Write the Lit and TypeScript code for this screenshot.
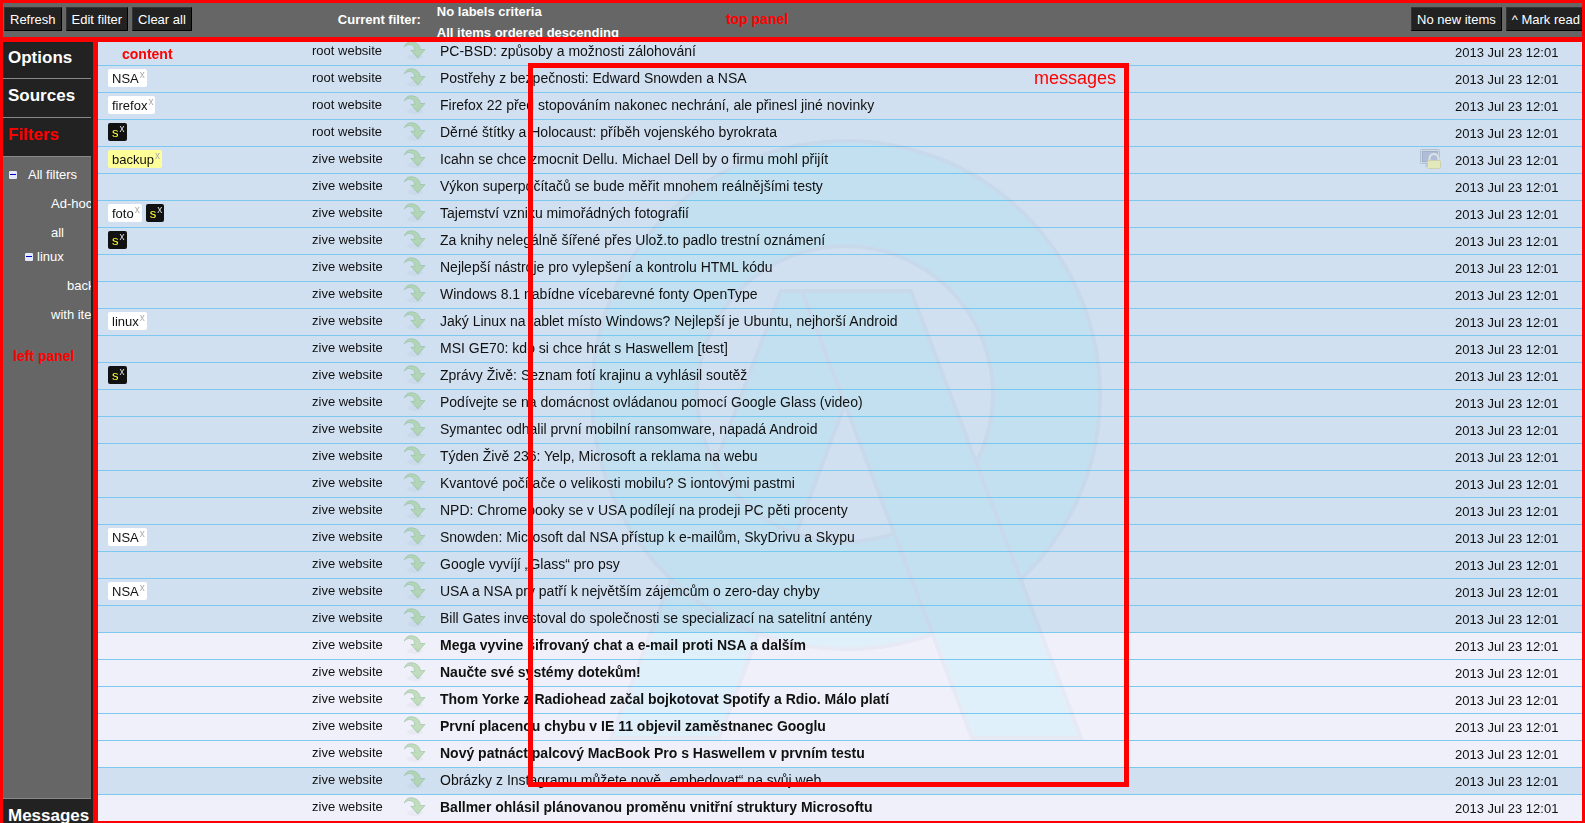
import { LitElement, html, css, nothing } from "lit";
import { customElement, property } from "lit/decorators.js";
import { classMap } from "lit/directives/class-map.js";

interface Message {
  labels?: string[];
  source: string;
  title: string;
  unread?: boolean;
  secure?: boolean;
}

const ROOT = "root website";
const ZIVE = "zive website";
const DATE = "2013 Jul 23 12:01";

const MESSAGES: Message[] = [
  { source: ROOT, title: "PC-BSD: způsoby a možnosti zálohování" },
  { source: ROOT, title: "Postřehy z bezpečnosti: Edward Snowden a NSA", labels: ["NSA"] },
  { source: ROOT, title: "Firefox 22 před stopováním nakonec nechrání, ale přinesl jiné novinky", labels: ["firefox"] },
  { source: ROOT, title: "Děrné štítky a Holocaust: příběh vojenského byrokrata", labels: ["s"] },
  { source: ZIVE, title: "Icahn se chce zmocnit Dellu. Michael Dell by o firmu mohl přijít", labels: ["backup"], secure: true },
  { source: ZIVE, title: "Výkon superpočítačů se bude měřit mnohem reálnějšími testy" },
  { source: ZIVE, title: "Tajemství vzniku mimořádných fotografií", labels: ["foto", "s"] },
  { source: ZIVE, title: "Za knihy nelegálně šířené přes Ulož.to padlo trestní oznámení", labels: ["s"] },
  { source: ZIVE, title: "Nejlepší nástroje pro vylepšení a kontrolu HTML kódu" },
  { source: ZIVE, title: "Windows 8.1 nabídne vícebarevné fonty OpenType" },
  { source: ZIVE, title: "Jaký Linux na tablet místo Windows? Nejlepší je Ubuntu, nejhorší Android", labels: ["linux"] },
  { source: ZIVE, title: "MSI GE70: kdo si chce hrát s Haswellem [test]" },
  { source: ZIVE, title: "Zprávy Živě: Seznam fotí krajinu a vyhlásil soutěž", labels: ["s"] },
  { source: ZIVE, title: "Podívejte se na domácnost ovládanou pomocí Google Glass (video)" },
  { source: ZIVE, title: "Symantec odhalil první mobilní ransomware, napadá Android" },
  { source: ZIVE, title: "Týden Živě 236: Yelp, Microsoft a reklama na webu" },
  { source: ZIVE, title: "Kvantové počítače o velikosti mobilu? S iontovými pastmi" },
  { source: ZIVE, title: "NPD: Chromebooky se v USA podílejí na prodeji PC pěti procenty" },
  { source: ZIVE, title: "Snowden: Microsoft dal NSA přístup k e-mailům, SkyDrivu a Skypu", labels: ["NSA"] },
  { source: ZIVE, title: "Google vyvíjí „Glass“ pro psy" },
  { source: ZIVE, title: "USA a NSA prý patří k největším zájemcům o zero-day chyby", labels: ["NSA"] },
  { source: ZIVE, title: "Bill Gates investoval do společnosti se specializací na satelitní antény" },
  { source: ZIVE, title: "Mega vyvine šifrovaný chat a e-mail proti NSA a dalším", unread: true },
  { source: ZIVE, title: "Naučte své systémy dotekům!", unread: true },
  { source: ZIVE, title: "Thom Yorke z Radiohead začal bojkotovat Spotify a Rdio. Málo platí", unread: true },
  { source: ZIVE, title: "První placenou chybu v IE 11 objevil zaměstnanec Googlu", unread: true },
  { source: ZIVE, title: "Nový patnáctipalcový MacBook Pro s Haswellem v prvním testu", unread: true },
  { source: ZIVE, title: "Obrázky z Instagramu můžete nově „embedovat“ na svůj web" },
  { source: ZIVE, title: "Ballmer ohlásil plánovanou proměnu vnitřní struktury Microsoftu", unread: true },
];

const arrowIcon = html`<svg class="icon" width="24" height="20" viewBox="0 0 24 20" aria-hidden="true">
  <ellipse cx="12" cy="16" rx="8" ry="3" fill="#8a9aa8" opacity=".08"/>
  <path d="M1.300 6C2.500 2.300 5 .7 8 .7C13 .9 16.800 3.500 17.300 8.500H22L14.800 17L7.800 9.300H11.800C11.600 6 10.300 4.200 7.300 3.600C4.500 3.300 2.800 4.500 1.300 6Z"
    fill="#96cc84" fill-opacity=".52" stroke="#7fb08a" stroke-opacity=".42"/>
</svg>`;

const secureIcon = html`<svg class="icon" width="22" height="21" viewBox="0 0 22 21" aria-hidden="true">
  <rect x=".5" y=".5" width="19" height="14" rx="1" fill="#d0dae6" stroke="#b0c0cf"/>
  <rect x="2.500" y="2.500" width="15" height="10" fill="#b0bcd8" stroke="#a0b0ca"/>
  <path d="M6 15h4v3H5z" fill="#bccad6"/>
  <path d="M9.500 12V9.500a4.500 4.500 0 0 1 9 0V12" fill="none" stroke="#b4c2d0" stroke-width="3"/>
  <path d="M9.500 12V9.500a4.500 4.500 0 0 1 9 0V12" fill="none" stroke="#dbe3ea" stroke-width="2"/>
  <rect x="7.500" y="11.500" width="13" height="8" rx="1" fill="#e2e7bc" stroke="#cbd0ae"/>
</svg>`;

const watermark = html`<svg class="watermark" width="516" height="606" viewBox="588 137 516 606" aria-hidden="true">
  <g fill="#eeffff" stroke="#f6f8fa" stroke-width="4">
    <path d="M781 291H802L845 404L719 738H611Z"/>
    <path fill-rule="evenodd" d="M592 395a254 254 0 1 0 508 0a254 254 0 1 0 -508 0ZM697 394a148 148 0 1 1 296 0a148 148 0 1 1 -296 0Z"/>
    <path d="M802 291H911L1081 738H972Z"/>
  </g>
</svg>`;

@customElement("message-label")
export class MessageLabel extends LitElement {
  @property() name = "";

  static styles = css`
    :host { display: inline-flex; }
    .label {
      display: flex; height: 18px; box-sizing: border-box; padding: 0 2px 0 4px;
      border-radius: 2px; background: #fff; color: #111; line-height: 19px;
    }
    .remove {
      display: flex; justify-content: flex-end; width: 6px; height: 12px; padding: 0; border: 0;
      background: none; color: #aaa; font: 10px/12px "Liberation Sans", Arial, sans-serif;
    }
    .yellow { background: #ffff99; }
    .dark { background: #111; color: #ffff33; }
    .dark .remove { color: #ddd; }
  `;

  render() {
    const kind = { label: true, yellow: this.name === "backup", dark: this.name === "s" };
    return html`<span class=${classMap(kind)}>${this.name}<button class="remove" aria-label="Remove label">x</button></span>`;
  }
}

@customElement("app-root")
export class AppRoot extends LitElement {
  static styles = css`
    :host {
      display: grid; grid-template: 42px minmax(0, 1fr) / 93px minmax(0, 1fr);
      height: 100vh; overflow: hidden; position: relative; background: #666;
      font: 13px/16px "Liberation Sans", Arial, sans-serif; color: #fff;
    }
    .top {
      grid-column: 1 / 3; display: flex; align-items: flex-start; box-sizing: border-box;
      padding: 4px 0 0 1px; gap: 4px; border: solid red; border-width: 3px 3px 5px 3px;
      overflow: hidden; white-space: nowrap;
    }
    .btn {
      flex: none; height: 24px; box-sizing: border-box; padding: 2px 5px 0; background: #222; color: #fff;
      border: 1px solid; border-color: #333 #000 #000 #333;
      font: 13px/20px "Liberation Sans", Arial, sans-serif;
    }
    .current { margin: 5px 12px 0 142px; font-weight: bold; }
    .criteria { font-weight: bold; line-height: 21px; margin-top: -6px; }
    .note { color: red; font-weight: bold; font-size: 14px; }
    .top-note { margin: 4px 0 0 103px; }
    .spacer { flex: 1; }
    .actions { display: flex; gap: 4px; width: 171px; overflow: hidden; }
    .left {
      display: flex; flex-direction: column; border-left: 3px solid red; background: #222;
      overflow: hidden; white-space: nowrap; box-sizing: border-box; padding-right: 2px;
    }
    .section {
      flex: none; height: 39px; box-sizing: border-box; margin: 0; border: 0; padding: 0 0 5px 5px;
      border-bottom: 1px solid #888; background: #222; color: #fff; text-align: left;
      font: bold 17px/20px "Liberation Sans", Arial, sans-serif;
    }
    .section.active { color: red; }
    .section.first { height: 37px; }
    .section.last { height: 25px; border-top: 1px solid #888; border-bottom: 0; padding: 7px 0 0 5px; }
    .tree { flex: 1; background: #666; overflow: hidden; }
    .node { display: flex; align-items: center; height: 29px; color: #fff; text-decoration: none; }
    .node.all { padding: 3px 0 0 6px; gap: 11px; }
    .node.group { height: 19px; padding: 0 0 5px 22px; gap: 4px; }
    .node.child { padding-left: 48px; }
    .node.grand { padding-left: 64px; }
    .toggle {
      width: 8px; height: 8px; padding: 0; box-sizing: border-box; border: 0; border-radius: 1px;
      background: linear-gradient(#00c, #00c) center / 6px 1px no-repeat #e4e8f8;
    }
    .left-note { padding: 19px 0 0 10px; }
    .content {
      position: relative; box-sizing: border-box; border: solid red; border-width: 0 3px 2px 5px;
      overflow: hidden; color: #111; isolation: isolate;
    }
    .list { width: 100%; border-collapse: separate; border-spacing: 0; table-layout: fixed; margin-top: -3px; }
    .row { background: #d1e0f1; }
    .row.unread { background: #f0f0fa; }
    .cell {
      height: 27px; box-sizing: border-box; padding: 0 0 2px; border-bottom: 1px solid #7dc8ee;
      vertical-align: middle; white-space: nowrap; overflow: hidden;
    }
    .c-labels { width: 214px; padding-left: 10px; }
    .c-source { width: 91px; }
    .c-icon { width: 37px; }
    .c-secure { width: 35px; }
    .c-date { width: 127px; padding: 2px 0 0; }
    .labels { display: flex; gap: 4px; }
    .title { font-size: 14px; line-height: 18px; }
    .unread .title { font-weight: bold; }
    .icon { display: block; }
    .watermark { position: absolute; left: 490px; top: 95px; mix-blend-mode: multiply; pointer-events: none; }
    .content-note { position: absolute; left: 24px; top: 4px; }
    .frame {
      position: absolute; left: 430px; top: 21px; width: 601px; height: 724px; box-sizing: border-box;
      border: 5px solid red; text-align: right; padding: 0 8px 0 0; pointer-events: none;
      color: red; font-size: 18px; line-height: 20px;
    }
  `;

  private row(m: Message) {
    return html`<tr class=${classMap({ row: true, unread: !!m.unread })}>
      <td class="cell c-labels"><div class="labels">${(m.labels ?? []).map((l) => html`<message-label .name=${l}></message-label>`)}</div></td>
      <td class="cell c-source">${m.source}</td>
      <td class="cell c-icon">${arrowIcon}</td>
      <td class="cell title">${m.title}</td>
      <td class="cell c-secure">${m.secure ? secureIcon : nothing}</td>
      <td class="cell c-date">${DATE}</td>
    </tr>`;
  }

  render() {
    return html`
      <header class="top">
        <button class="btn">Refresh</button>
        <button class="btn">Edit filter</button>
        <button class="btn">Clear all</button>
        <span class="current">Current filter:</span>
        <div class="criteria">No labels criteria<br />All items ordered descending</div>
        <span class="note top-note">top panel</span>
        <span class="spacer"></span>
        <div class="actions">
          <button class="btn">No new items</button>
          <button class="btn">^ Mark read</button>
        </div>
      </header>
      <nav class="left">
        <button class="section first">Options</button>
        <button class="section">Sources</button>
        <button class="section active">Filters</button>
        <div class="tree">
          <div class="node all"><button class="toggle" aria-label="Collapse"></button>All filters</div>
          <a class="node child" href="#adhoc">Ad-hoc</a>
          <a class="node child" href="#all">all</a>
          <div class="node group"><button class="toggle" aria-label="Collapse"></button>linux</div>
          <a class="node grand" href="#backup">backup</a>
          <a class="node child" href="#items">with items</a>
          <div class="note left-note">left panel</div>
        </div>
        <button class="section last">Messages</button>
      </nav>
      <main class="content">
        <table class="list"><tbody>${MESSAGES.map((m) => this.row(m))}</tbody></table>
        ${watermark}
        <span class="note content-note">content</span>
        <div class="frame">messages</div>
      </main>
    `;
  }
}
